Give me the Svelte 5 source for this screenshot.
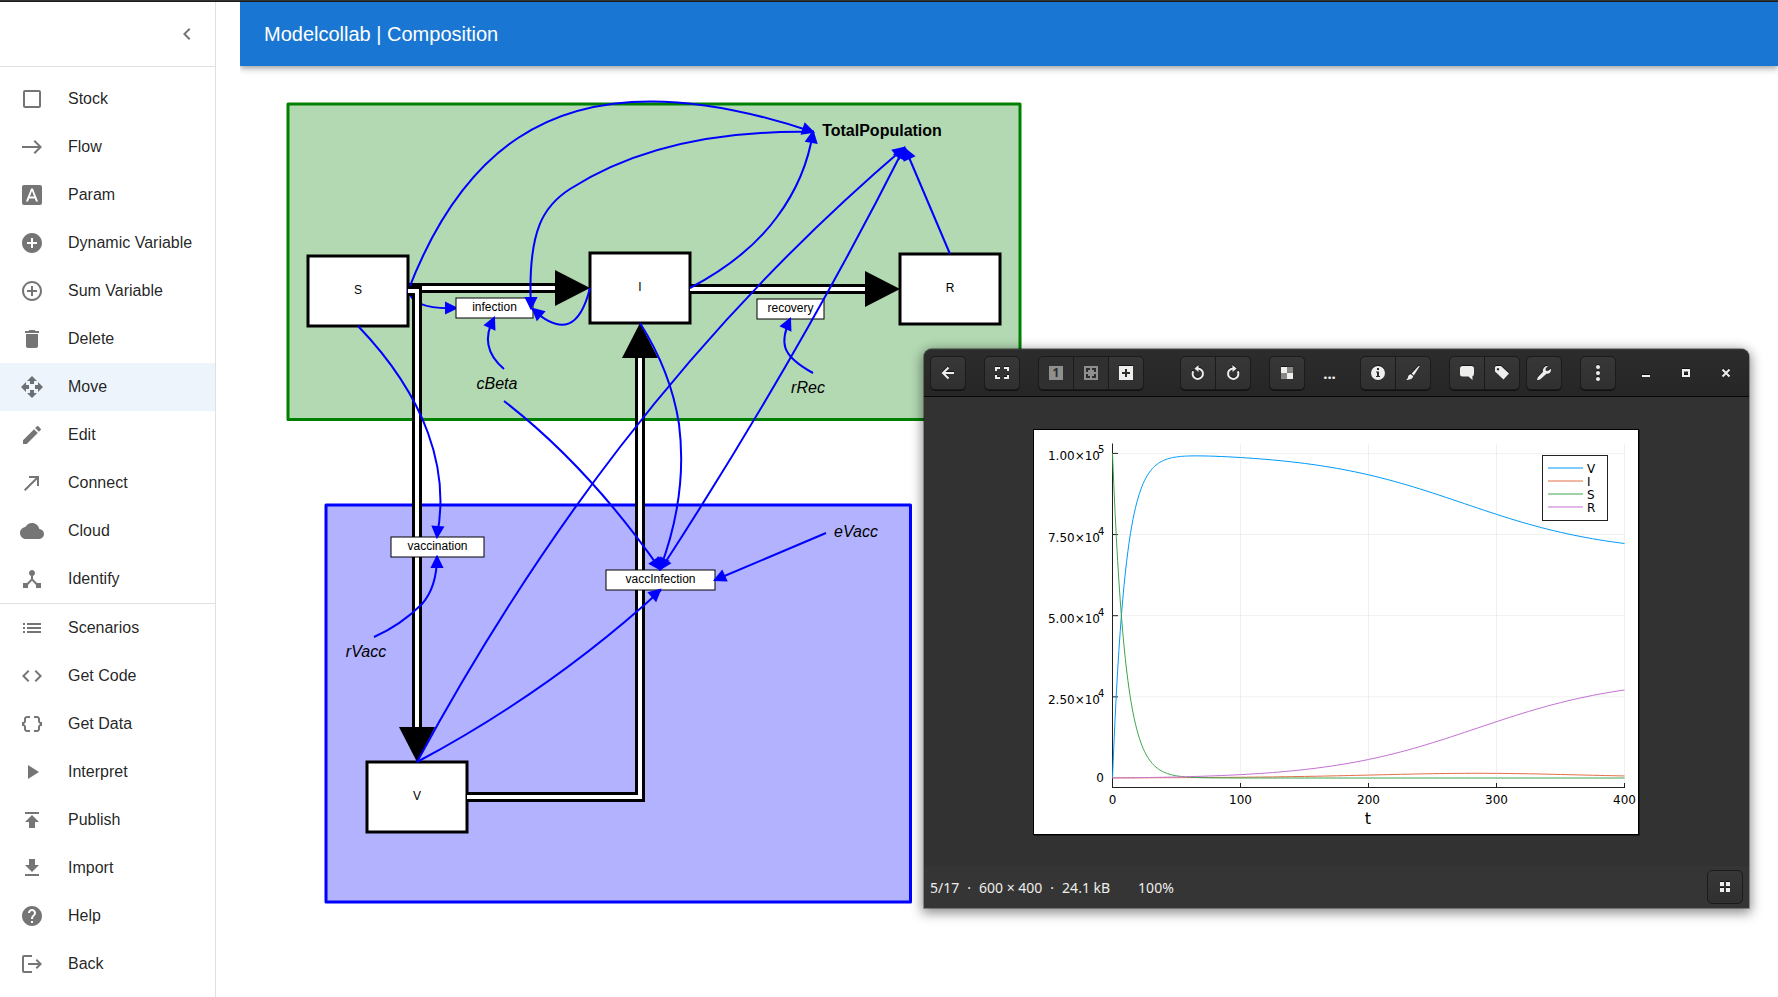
<script lang="ts">
  type Point = [number, number];

  const tools = [
    { label: 'Stock', icon: 'M19 5v14H5V5h14m0-2H5c-1.1 0-2 .9-2 2v14c0 1.1.9 2 2 2h14c1.1 0 2-.9 2-2V5c0-1.1-.9-2-2-2z' },
    { label: 'Flow', icon: 'M15 5l-1.41 1.41L18.17 11H2v2h16.17l-4.59 4.59L15 19l7-7-7-7z' },
    { label: 'Param', icon: 'M9.93 13.5h4.14L12 7.98zM20 2H4c-1.1 0-2 .9-2 2v16c0 1.1.9 2 2 2h16c1.1 0 2-.9 2-2V4c0-1.1-.9-2-2-2zm-4.05 16.5l-1.14-3H9.17l-1.12 3H5.96l5.11-13h1.86l5.11 13h-2.09z' },
    { label: 'Dynamic Variable', icon: 'M12 2C6.48 2 2 6.48 2 12s4.48 10 10 10 10-4.48 10-10S17.52 2 12 2zm5 11h-4v4h-2v-4H7v-2h4V7h2v4h4v2z' },
    { label: 'Sum Variable', icon: 'M13 7h-2v4H7v2h4v4h2v-4h4v-2h-4V7zm-1-5C6.48 2 2 6.48 2 12s4.48 10 10 10 10-4.48 10-10S17.52 2 12 2zm0 18c-4.41 0-8-3.59-8-8s3.59-8 8-8 8 3.59 8 8-3.59 8-8 8z' },
    { label: 'Delete', icon: 'M6 19c0 1.1.9 2 2 2h8c1.1 0 2-.9 2-2V7H6v12zM19 4h-3.5l-1-1h-5l-1 1H5v2h14V4z' },
    { label: 'Move', icon: 'M10 9h4V6h3l-5-5-5 5h3v3zm-1 1H6V7l-5 5 5 5v-3h3v-4zm14 2-5-5v3h-3v4h3v3l5-5zm-9 3h-4v3H7l5 5 5-5h-3v-3z' },
    { label: 'Edit', icon: 'M3 17.25V21h3.75L17.81 9.94l-3.75-3.75L3 17.25zM20.71 7.04c.39-.39.39-1.02 0-1.41l-2.34-2.34c-.39-.39-1.02-.39-1.41 0l-1.83 1.83 3.75 3.75 1.83-1.83z' },
    { label: 'Connect', icon: 'M9 5v2h6.59L4 18.59 5.41 20 17 8.41V15h2V5z' },
    { label: 'Cloud', icon: 'M19.35 10.04C18.67 6.59 15.64 4 12 4 9.11 4 6.6 5.64 5.35 8.04 2.34 8.36 0 10.91 0 14c0 3.31 2.69 6 6 6h13c2.76 0 5-2.24 5-5 0-2.64-2.05-4.78-4.65-4.96z' },
    { label: 'Identify', icon: 'M17 16l-4-4V8.82C14.16 8.4 15 7.3 15 6c0-1.66-1.34-3-3-3S9 4.34 9 6c0 1.3.84 2.4 2 2.82V12l-4 4H3v5h5v-3.05l4-4.2 4 4.2V21h5v-5h-4z' }
  ];

  const actions = [
    { label: 'Scenarios', icon: 'M3 13h2v-2H3v2zm0 4h2v-2H3v2zm0-8h2V7H3v2zm4 4h14v-2H7v2zm0 4h14v-2H7v2zM7 7v2h14V7H7z' },
    { label: 'Get Code', icon: 'M9.4 16.6L4.8 12l4.6-4.6L8 6l-6 6 6 6 1.4-1.4zm5.2 0l4.6-4.6-4.6-4.6L16 6l6 6-6 6-1.4-1.4z' },
    { label: 'Get Data', icon: 'M4 7v2c0 .55-.45 1-1 1H2v4h1c.55 0 1 .45 1 1v2c0 1.65 1.35 3 3 3h3v-2H7c-.55 0-1-.45-1-1v-2c0-1.3-.84-2.42-2-2.83v-.34C5.16 11.42 6 10.3 6 9V7c0-.55.45-1 1-1h3V4H7C5.35 4 4 5.35 4 7zm17 3c-.55 0-1-.45-1-1V7c0-1.65-1.35-3-3-3h-3v2h3c.55 0 1 .45 1 1v2c0 1.3.84 2.42 2 2.83v.34c-1.16.41-2 1.52-2 2.83v2c0 .55-.45 1-1 1h-3v2h3c1.65 0 3-1.35 3-3v-2c0-.55.45-1 1-1h1v-4h-1z' },
    { label: 'Interpret', icon: 'M8 5v14l11-7z' },
    { label: 'Publish', icon: 'M5 4v2h14V4H5zm0 10h4v6h6v-6h4l-7-7-7 7z' },
    { label: 'Import', icon: 'M5 20h14v-2H5v2zM19 9h-4V3H9v6H5l7 7 7-7z' },
    { label: 'Help', icon: 'M12 2C6.48 2 2 6.48 2 12s4.48 10 10 10 10-4.48 10-10S17.52 2 12 2zm1 17h-2v-2h2v2zm2.07-7.75l-.9.92C13.45 12.9 13 13.5 13 15h-2v-.5c0-1.1.45-2.1 1.17-2.83l1.24-1.26c.37-.36.59-.86.59-1.41 0-1.1-.9-2-2-2s-2 .9-2 2H8c0-2.21 1.79-4 4-4s4 1.79 4 4c0 .88-.36 1.68-.93 2.25z' },
    { label: 'Back', icon: 'm17 7-1.41 1.41L18.17 11H8v2h10.17l-2.58 2.58L17 17l5-5zM4 5h8V3H4c-1.1 0-2 .9-2 2v14c0 1.1.9 2 2 2h8v-2H4V5z' }
  ];

  let selected = $state('Move');

  // diagram, in model coordinates
  const pan = { x: -240, y: -66 };

  const stocks = [
    { label: 'S', x: 308, y: 256 },
    { label: 'I', x: 590, y: 253 },
    { label: 'R', x: 900, y: 254 },
    { label: 'V', x: 367, y: 762 }
  ];

  const flows = [
    { d: 'M408 288H556', head: '555,270 590,288 555,306' },
    { d: 'M690 289H866', head: '865,271 900,289 865,307' },
    { d: 'M467 797H640V357', head: '622,358 640,323 658,358' }
  ];
  const vaccinationFlow = { d: 'M408 291H417V728', head: '399,727 417,762 435,727' };

  const variables = [
    { label: 'infection', x: 456, y: 298, width: 77 },
    { label: 'recovery', x: 757, y: 299, width: 67 },
    { label: 'vaccination', x: 391, y: 537, width: 93 },
    { label: 'vaccInfection', x: 606, y: 570, width: 109 }
  ];

  const params = [
    { label: 'cBeta', x: 497, y: 389 },
    { label: 'rRec', x: 808, y: 393 },
    { label: 'rVacc', x: 366, y: 657 },
    { label: 'eVacc', x: 856, y: 537 }
  ];

  // each connection ends in an arrow head at `tip`, pointing away from `from`
  type Connection = { d: string; heads: { tip: Point; from: Point }[] };

  const lowerConnections: Connection[] = [
    { d: 'M408 291Q449 184 518 138Q623 68 813 132', heads: [{ tip: [813, 132], from: [801, 128] }] },
    { d: 'M408 291Q414 310 456 308', heads: [{ tip: [456, 308], from: [444, 308] }] }
  ];

  const upperConnections: Connection[] = [
    { d: 'M813 132Q664 129 570 189C545 205 527 228 531 309', heads: [{ tip: [531, 308], from: [531, 296] }] },
    { d: 'M590 288C580 328 562 336 532 309', heads: [{ tip: [533, 309], from: [542, 317] }] },
    { d: 'M504 369Q478 347 494 318', heads: [{ tip: [494, 318], from: [489, 329] }] },
    { d: 'M504 401Q588 466 660 569', heads: [{ tip: [660, 569], from: [653, 559] }] },
    { d: 'M358 326Q408 378 428 433Q447 485 437 536', heads: [{ tip: [437, 537], from: [438, 525] }] },
    { d: 'M374 637Q401 625 422 604Q437 587 437 556', heads: [{ tip: [437, 557], from: [437, 569] }] },
    { d: 'M813 373C780 355 780 342 790 319', heads: [{ tip: [790, 319], from: [785, 330] }] },
    { d: 'M690 288Q747 258 777 217Q806 178 813 132', heads: [{ tip: [813, 132], from: [811, 144] }] },
    { d: 'M640 323Q671 372 679 424Q688 495 660 569', heads: [{ tip: [660, 569], from: [664, 557] }] },
    { d: 'M417 762Q510 590 620 447Q748 281 904 148', heads: [{ tip: [904, 148], from: [894, 156] }] },
    { d: 'M417 762Q552 690 661 590', heads: [{ tip: [660, 590], from: [651, 598] }] },
    {
      d: 'M904 148Q798 358 661 569',
      heads: [{ tip: [904, 148], from: [898, 159] }, { tip: [660, 569], from: [667, 558] }]
    },
    { d: 'M950 254L905 148', heads: [{ tip: [905, 149], from: [910, 160] }] },
    { d: 'M826 533L715 580', heads: [{ tip: [715, 580], from: [726, 575] }] }
  ];

  function headPoints(tip: Point, from: Point): string {
    const length = Math.hypot(tip[0] - from[0], tip[1] - from[1]);
    const ux = (tip[0] - from[0]) / length;
    const uy = (tip[1] - from[1]) / length;
    const bx = tip[0] - ux * 10;
    const by = tip[1] - uy * 10;
    return `${tip[0]},${tip[1]} ${bx - uy * 5},${by + ux * 5} ${bx + uy * 5},${by - ux * 5}`;
  }

  // simulation results
  const population = 100000;
  const growth = (t: number) => 1 / (1 + Math.exp(-0.017 * (t - 285)));
  const susceptible = (t: number) => population * Math.exp(-t / 10);
  const infected = (t: number) => 5800 * growth(t) * (1 - growth(t));
  const recovered = (t: number) => 31000 * growth(t) * (1 - Math.exp(-t / 60));
  const vaccinated = (t: number) => population - susceptible(t) - infected(t) - recovered(t);

  const series = [
    { label: 'V', color: '#009afa', value: vaccinated },
    { label: 'I', color: '#e36f47', value: infected },
    { label: 'S', color: '#3ea44e', value: susceptible },
    { label: 'R', color: '#c371d2', value: recovered }
  ];

  const sx = (t: number) => 78.5 + t * 1.28;
  const sy = (v: number) => 348 - (v / population) * 324.6;

  function plot(value: (t: number) => number): string {
    const points = [];
    for (let t = 0; t <= 400; t += t < 60 ? 1 : 5) {
      points.push(`${sx(t).toFixed(2)},${sy(Math.max(0, value(t))).toFixed(2)}`);
    }
    return points.join(' ');
  }

  const xTicks = [0, 100, 200, 300, 400];
  const yTicks = [
    { value: 100000, label: '1.00×10', power: '5' },
    { value: 75000, label: '7.50×10', power: '4' },
    { value: 50000, label: '5.00×10', power: '4' },
    { value: 25000, label: '2.50×10', power: '4' }
  ];
</script>

{#snippet menu(items: { label: string; icon: string }[])}
  {#each items as item}
    <li>
      <button class="item" class:selected={selected === item.label} onclick={() => (selected = item.label)}>
        <svg class="item-icon" viewBox="0 0 24 24" aria-hidden="true"><path d={item.icon} /></svg>
        <span>{item.label}</span>
      </button>
    </li>
  {/each}
{/snippet}

{#snippet flow(f: { d: string; head: string })}
  <path class="flow-outer" d={f.d} />
  <path class="flow-inner" d={f.d} />
  <polygon points={f.head} />
{/snippet}

{#snippet connection(c: Connection)}
  <path class="connection" d={c.d} />
  {#each c.heads as head}
    <polygon class="connection-head" points={headPoints(head.tip, head.from)} />
  {/each}
{/snippet}

<div class="strip"></div>
<div class="app">
  <nav class="sidebar">
    <div class="sidebar-head">
      <button class="collapse" aria-label="Collapse menu">
        <svg class="item-icon" viewBox="0 0 24 24"><path d="M15.41 7.41 14 6l-6 6 6 6 1.41-1.41L10.83 12z" /></svg>
      </button>
    </div>
    <ul class="first">{@render menu(tools)}</ul>
    <ul>{@render menu(actions)}</ul>
  </nav>

  <main>
    <header><h1>Modelcollab | Composition</h1></header>

    <div class="canvas">
      <svg class="diagram" role="img" aria-label="Stock and flow diagram">
        <g transform="translate({pan.x} {pan.y})">
          <rect class="group-green" x="288" y="104" width="732" height="315.5" />
          <rect class="group-blue" x="326" y="505" width="584.5" height="397" />

          {#each stocks as stock}
            <rect class="stock" x={stock.x} y={stock.y} width="100" height="70" />
            <text class="small" x={stock.x + 50} y={stock.y + 38}>{stock.label}</text>
          {/each}

          {#each flows as f}
            {@render flow(f)}
          {/each}
          {#each lowerConnections as c}
            {@render connection(c)}
          {/each}
          {@render flow(vaccinationFlow)}

          {#each variables as variable}
            <rect class="variable" x={variable.x} y={variable.y} width={variable.width} height="20" />
            <text class="small" x={variable.x + variable.width / 2} y={variable.y + 13}>{variable.label}</text>
          {/each}
          {#each params as param}
            <text class="param" x={param.x} y={param.y}>{param.label}</text>
          {/each}
          <text class="sum" x="882" y="136">TotalPopulation</text>

          {#each upperConnections as c}
            {@render connection(c)}
          {/each}
        </g>
      </svg>

      <section class="window" aria-label="Image viewer">
        <div class="titlebar">
          <div class="group">
            <button class="tool" aria-label="Back">
              <svg viewBox="0 0 16 16"><path class="line" d="M14 8H3.5M8.5 2.5 3 8l5.5 5.5" /></svg>
            </button>
          </div>
          <div class="group">
            <button class="tool" aria-label="Fullscreen">
              <svg viewBox="0 0 16 16"><path class="line" d="M2 6V3h4M10 3h4v3M14 10v3h-4M6 13H2v-3" /></svg>
            </button>
          </div>
          <div class="group wide">
            <button class="tool" aria-label="Original size" disabled>
              <svg viewBox="0 0 16 16"><rect x="1" y="1" width="14" height="14" /><text class="one" x="8" y="12">1</text></svg>
            </button>
            <button class="tool" aria-label="Fit to window" disabled>
              <svg viewBox="0 0 16 16">
                <rect x="1" y="1" width="14" height="14" />
                <path class="cut" d="M4 7V4h3M9 4h3v3M12 9v3H9M7 12H4V9" />
              </svg>
            </button>
            <button class="tool" aria-label="Zoom in">
              <svg viewBox="0 0 16 16"><rect x="1" y="1" width="14" height="14" /><path class="cut" d="M8 4v8M4 8h8" /></svg>
            </button>
          </div>
          <div class="group">
            <button class="tool" aria-label="Rotate left">
              <svg viewBox="0 0 16 16"><path class="line" d="M3.2 6.2A5.2 5.2 0 1 0 8 3.5" /><path d="M8.5 0v7L4.5 3.5z" /></svg>
            </button>
            <button class="tool" aria-label="Rotate right">
              <svg viewBox="0 0 16 16"><path class="line" d="M12.8 6.2A5.2 5.2 0 1 1 8 3.5" /><path d="M7.5 0v7l4-3.5z" /></svg>
            </button>
          </div>
          <div class="group">
            <button class="tool" aria-label="Transparency">
              <svg viewBox="0 0 16 16">
                <path d="M2 2h6v6H2zM8 8h6v6H8z" />
                <path opacity=".5" d="M8 2h6v6H8zM2 8h6v6H2z" />
              </svg>
            </button>
          </div>
          <span class="title">...</span>
          <div class="group">
            <button class="tool" aria-label="Properties">
              <svg viewBox="0 0 16 16"><circle cx="8" cy="8" r="7" /><path class="dark" d="M7 3h2v2H7zM6 6.5h3V11h1v1H6v-1h1V7.5H6z" /></svg>
            </button>
            <button class="tool" aria-label="Edit image">
              <svg viewBox="0 0 16 16"><path d="M14.8 1 8.8 10.5 6.7 8.5 13.3 1.3zM6 9.2l2.2 2.1C7.8 14 4.5 15.2 1 14.8c2-1 1.6-2 2.2-3.6C3.7 9.8 4.9 9.2 6 9.2z" /></svg>
            </button>
          </div>
          <div class="group near">
            <button class="tool" aria-label="Comment">
              <svg viewBox="0 0 16 16"><path d="M3.5 1h9Q15 1 15 3.5v5Q15 11 13.5 11v4L9.5 11.5h-6Q1 11.5 1 9V3.5Q1 1 3.5 1z" /></svg>
            </button>
            <button class="tool" aria-label="Tags">
              <svg viewBox="0 0 16 16"><path fill-rule="evenodd" d="M1 2.5Q1 1 2.5 1H7l8 7.5-5.5 6L1 6.5zM4 3a1.2 1.2 0 1 0 .01 0z" /></svg>
            </button>
          </div>
          <div class="group">
            <button class="tool" aria-label="Tools">
              <svg viewBox="0 0 16 16"><path d="M12 1 9.7 3.3v2.5h2.6L14.8 3.7c.8 3-1.2 5.4-4.3 5.1L4.3 14.3Q3 15.3 1 15l.8-2.8L7 6.8C6.5 3.3 9 .5 12 1z" /></svg>
            </button>
          </div>
          <div class="group">
            <button class="tool" aria-label="Menu">
              <svg viewBox="0 0 16 16"><circle cx="8" cy="2" r="2" /><circle cx="8" cy="8" r="2" /><circle cx="8" cy="14" r="2" /></svg>
            </button>
          </div>
          <div class="controls">
            <button aria-label="Minimize"><svg viewBox="0 0 16 16"><path d="M4 10h8v2H4z" /></svg></button>
            <button aria-label="Maximize"><svg viewBox="0 0 16 16"><path fill-rule="evenodd" d="M4 4h8v8H4zM6 6.5v3.5h4V6.5z" /></svg></button>
            <button aria-label="Close"><svg viewBox="0 0 16 16"><path class="line" d="m4.5 4.5 7 7M11.5 4.5l-7 7" /></svg></button>
          </div>
        </div>

        <div class="viewer">
          <svg class="chart" viewBox="0 0 604 404" role="img" aria-label="Simulation results over t">
            {#each xTicks as t}
              <line class="grid" x1={sx(t)} x2={sx(t)} y1="14" y2="357" />
            {/each}
            {#each yTicks as tick}
              <line class="grid" x1="79" x2="590" y1={sy(tick.value)} y2={sy(tick.value)} />
            {/each}
            <path class="axis" d="M78.5 13.5V357.5H590.5" />
            {#each xTicks as t}
              <line class="axis" x1={sx(t)} x2={sx(t)} y1="353" y2="358" />
              <text class="tick" x={sx(t)} y="374">{t}</text>
            {/each}
            {#each yTicks as tick}
              <line class="axis" x1="79" x2="84" y1={sy(tick.value)} y2={sy(tick.value)} />
              <text class="tick end" x="66" y={sy(tick.value) + 7}>{tick.label}</text>
              <text class="power" x="64" y={sy(tick.value)}>{tick.power}</text>
            {/each}
            <text class="tick end" x="70" y="352">0</text>
            <text class="axis-name" x="334" y="394">t</text>
            {#each series as s}
              <polyline class="series" points={plot(s.value)} stroke={s.color} />
            {/each}
            <rect class="legend" x="508.5" y="25.5" width="65" height="65" />
            {#each series as s, i}
              <line class="series" x1="514" x2="549" y1={38 + i * 13} y2={38 + i * 13} stroke={s.color} />
              <text class="legend-text" x="553" y={43 + i * 13}>{s.label}</text>
            {/each}
          </svg>
        </div>

        <div class="status">
          <span>5/17</span>
          <span>·</span>
          <span>600 × 400</span>
          <span>·</span>
          <span>24.1 kB</span>
          <span class="zoom">100%</span>
          <button class="tool" aria-label="Thumbnails">
            <svg viewBox="0 0 16 16"><path d="M3 3h4v4H3zM9 3h4v4H9zM3 9h4v4H3zM9 9h4v4H9z" /></svg>
          </button>
        </div>
      </section>
    </div>
  </main>
</div>

<style>
  :global(body) {
    margin: 0;
    background: #fff;
    font-family: 'Liberation Sans', Arial, sans-serif;
  }

  button {
    padding: 0;
    border: 0;
    background: none;
    font: inherit;
    color: inherit;
    cursor: pointer;
  }

  .strip {
    height: 2px;
    box-sizing: border-box;
    background: #333;
    border-bottom: 1px solid #1a1a1a;
  }

  .app {
    display: flex;
    min-height: calc(100vh - 2px);
  }

  .sidebar {
    flex: none;
    width: 215px;
    border-right: 1px solid #e0e0e0;
    color: rgba(0, 0, 0, 0.87);
  }

  .sidebar-head {
    display: flex;
    align-items: center;
    justify-content: flex-end;
    height: 64px;
    padding-right: 16px;
    border-bottom: 1px solid #e0e0e0;
  }

  .collapse {
    display: flex;
  }

  ul {
    margin: 0;
    padding: 0;
    list-style: none;
  }

  .first {
    padding-top: 8px;
    border-bottom: 1px solid #e0e0e0;
  }

  .item {
    display: flex;
    align-items: center;
    gap: 24px;
    width: 100%;
    height: 48px;
    padding: 0 20px;
    font-size: 16px;
    line-height: 24px;
    white-space: nowrap;
  }

  .item.selected {
    background: rgba(25, 118, 210, 0.08);
  }

  .item-icon {
    flex: none;
    width: 24px;
    height: 24px;
    fill: rgba(0, 0, 0, 0.54);
  }

  main {
    flex: 1;
    display: flex;
    flex-direction: column;
    min-width: 0;
    padding-left: 24px;
  }

  header {
    display: flex;
    align-items: center;
    height: 64px;
    padding: 0 24px;
    background: #1976d2;
    color: #fff;
    box-shadow:
      0 2px 4px -1px rgba(0, 0, 0, 0.2),
      0 4px 5px rgba(0, 0, 0, 0.14),
      0 1px 10px rgba(0, 0, 0, 0.12);
    clip-path: inset(0 0 -16px 0);
  }

  h1 {
    margin: 0;
    font-size: 20px;
    font-weight: 400;
    line-height: 32px;
  }

  .canvas {
    position: relative;
    flex: 1;
    display: flex;
    overflow: hidden;
  }

  .diagram {
    flex: 1;
    min-width: 0;
  }

  .diagram text {
    text-anchor: middle;
  }

  .small {
    font-size: 12px;
  }

  .param {
    font-size: 16px;
    font-style: italic;
  }

  .sum {
    font-size: 16px;
    font-weight: 700;
  }

  .group-green,
  .group-blue {
    stroke-width: 3;
    stroke-linejoin: round;
  }

  .group-green {
    fill: #b2d9b2;
    stroke: #008000;
  }

  .group-blue {
    fill: #b2b2ff;
    stroke: #00f;
  }

  .stock {
    fill: #fff;
    stroke: #000;
    stroke-width: 3;
  }

  .variable {
    fill: #fff;
    stroke: #000;
  }

  .flow-outer,
  .flow-inner {
    fill: none;
    stroke: #000;
    stroke-width: 10;
  }

  .flow-inner {
    stroke: #fff;
    stroke-width: 4;
  }

  .connection {
    fill: none;
    stroke: #00f;
    stroke-width: 2;
  }

  .connection-head {
    fill: #00f;
    stroke: #00f;
    stroke-width: 2;
  }

  .window {
    position: absolute;
    left: 684px;
    top: 283px;
    width: 825px;
    border-radius: 8px 8px 0 0;
    background: #323232;
    color: #eeeeec;
    font-family: 'Noto Sans', sans-serif;
    box-shadow:
      0 0 0 1px rgba(0, 0, 0, 0.3),
      0 3px 12px 2px rgba(0, 0, 0, 0.45);
  }

  .titlebar {
    display: flex;
    align-items: center;
    gap: 18px;
    height: 47px;
    padding: 0 11px 0 6px;
    border-bottom: 1px solid #070707;
    border-radius: 8px 8px 0 0;
    background: linear-gradient(#2c2c2c, #262626);
    box-shadow: inset 0 1px #393939;
  }

  .group {
    display: flex;
    flex: none;
    border-radius: 5px;
    box-shadow: 0 1px #111;
  }

  .group.wide {
    margin-right: 18px;
  }

  .group.near {
    margin-right: -12px;
  }

  .tool {
    display: flex;
    align-items: center;
    justify-content: center;
    box-sizing: border-box;
    width: 36px;
    height: 34px;
    border: 1px solid #1b1b1b;
    background: linear-gradient(#373737, #303030);
  }

  .tool + .tool {
    margin-left: -1px;
  }

  .tool:first-child {
    border-radius: 5px 0 0 5px;
  }

  .tool:last-child {
    border-radius: 0 5px 5px 0;
  }

  .tool:only-child {
    border-radius: 5px;
  }

  .tool svg,
  .controls svg {
    width: 16px;
    height: 16px;
    fill: #eeeeec;
    filter: drop-shadow(0 -1px rgba(0, 0, 0, 0.6));
  }

  .tool:disabled {
    background: #303030;
  }

  .tool:disabled svg {
    fill: #8f8f8e;
    filter: none;
  }

  .line {
    fill: none;
    stroke: #eeeeec;
    stroke-width: 2;
  }

  .cut {
    fill: none;
    stroke: #2d2d2d;
    stroke-width: 2;
  }

  .dark,
  .one {
    fill: #2d2d2d;
  }

  .one {
    font-size: 12px;
    font-weight: 700;
    text-anchor: middle;
  }

  .title {
    flex: 1;
    padding-right: 6px;
    font-size: 15px;
    font-weight: 700;
    text-align: center;
  }

  .controls {
    display: flex;
    gap: 16px;
  }

  .controls button {
    display: flex;
    align-items: center;
    justify-content: center;
    width: 24px;
    height: 24px;
  }

  .viewer {
    display: flex;
    justify-content: center;
    padding: 32px 1px 31px 0;
  }

  .chart {
    width: 604px;
    height: 404px;
    border: 1px solid #000;
    background: #fff;
    box-shadow: 1px 1px #1c1c1c;
    font-family: 'DejaVu Sans', sans-serif;
  }

  .grid {
    stroke: rgba(0, 0, 0, 0.06);
  }

  .axis {
    fill: none;
    stroke: #222;
  }

  .tick,
  .legend-text {
    font-size: 12px;
  }

  .tick {
    text-anchor: middle;
  }

  .tick.end {
    text-anchor: end;
  }

  .power {
    font-size: 10px;
  }

  .axis-name {
    font-size: 16px;
    text-anchor: middle;
  }

  .series {
    fill: none;
    stroke-width: 1;
  }

  .legend {
    fill: #fff;
    stroke: #222;
  }

  .status {
    display: flex;
    align-items: center;
    gap: 8px;
    height: 42px;
    padding: 0 6px;
    background: #353535;
    font-size: 14px;
  }

  .zoom {
    margin-left: 20px;
  }

  .status .tool {
    margin-left: auto;
    border-radius: 5px;
  }
</style>
